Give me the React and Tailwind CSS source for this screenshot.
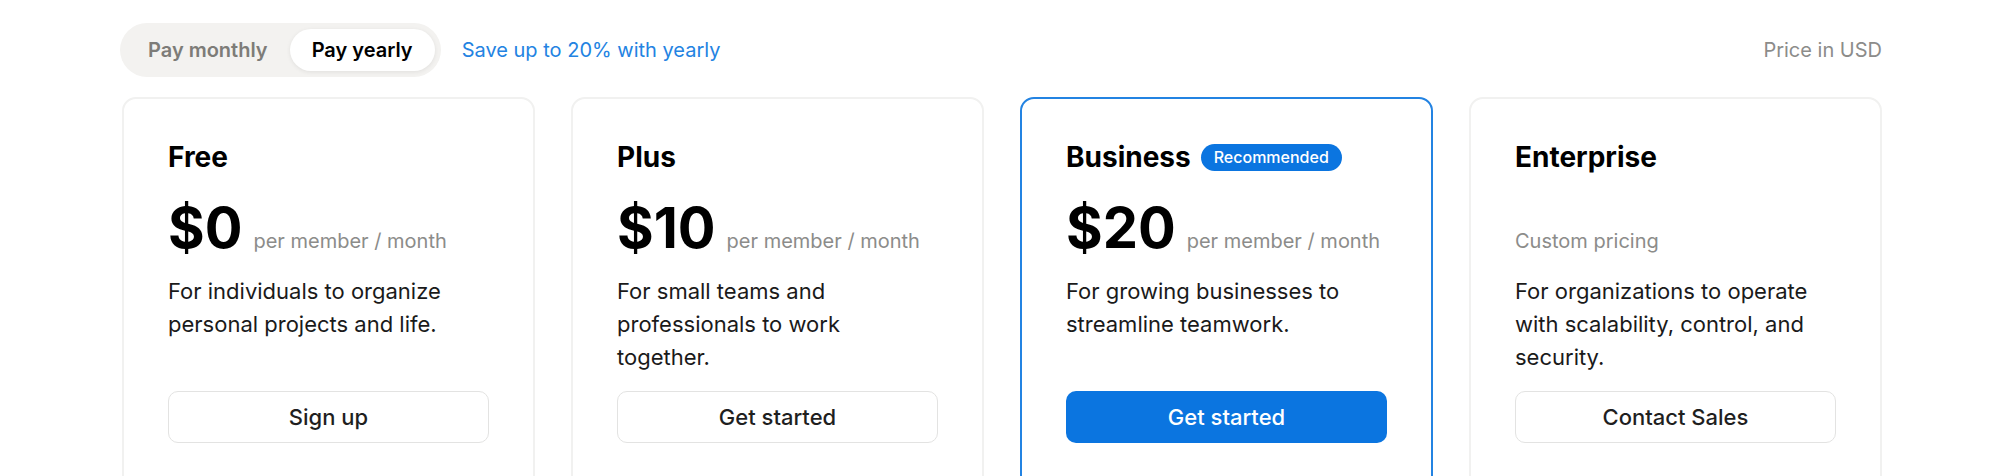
import React, { useState } from 'react';

const plans = [
  {
    name: 'Free',
    price: '$0',
    unit: 'per member / month',
    description: 'For individuals to organize personal projects and life.',
    cta: 'Sign up',
  },
  {
    name: 'Plus',
    price: '$10',
    unit: 'per member / month',
    description: 'For small teams and professionals to work together.',
    cta: 'Get started',
  },
  {
    name: 'Business',
    price: '$20',
    unit: 'per member / month',
    description: 'For growing businesses to streamline teamwork.',
    cta: 'Get started',
    recommended: true,
  },
  {
    name: 'Enterprise',
    price: null,
    unit: 'Custom pricing',
    description: 'For organizations to operate with scalability, control, and security.',
    cta: 'Contact Sales',
  },
];

const PlanCard = ({ plan }) => {
  return (
    <div
      className={`min-h-[430px] rounded-[14px] border-2 bg-white px-[44px] pt-[40px] ${
        plan.recommended ? 'border-[#2383e2]' : 'border-[#f1f1f0]'
      }`}
    >
      <div className="flex h-[36px] items-center gap-[10px]">
        <h3 className="text-[28px] font-bold leading-[36px] text-black">{plan.name}</h3>
        {plan.recommended && (
          <span className="flex h-[27px] items-center rounded-full bg-[#0b75e0] px-[13px] text-[16px] font-medium text-white">
            Recommended
          </span>
        )}
      </div>

      {plan.price ? (
        <div className="mt-[21px] flex h-[64px] items-baseline gap-[11px]">
          <span className="text-[56px] font-bold leading-[64px] text-black">{plan.price}</span>
          <span className="text-[20px] text-[#8c8c8a]">{plan.unit}</span>
        </div>
      ) : (
        <div className="mt-[21px] h-[64px] pt-[30px] text-[20px] leading-[30px] text-[#8c8c8a]">
          {plan.unit}
        </div>
      )}

      <p className="mt-[15px] min-h-[99px] text-[22px] leading-[33px] text-[#1a1a1a]">
        {plan.description}
      </p>

      <button
        className={`mt-[17px] flex h-[52px] w-full items-center justify-center rounded-[10px] text-[22px] font-medium ${
          plan.recommended
            ? 'bg-[#0b75e0] text-white'
            : 'border-[1.5px] border-[#e3e3e2] bg-white text-[#1f1f1f]'
        }`}
      >
        {plan.cta}
      </button>
    </div>
  );
};

export default function App() {
  const [billing, setBilling] = useState('yearly');

  return (
    <div className="min-h-screen bg-white font-['Inter',sans-serif]">
      <div className="ml-[122px] w-[1760px] pt-[23px]">
        <div className="flex h-[54px] items-center justify-between">
          <div className="flex items-center gap-[21px]">
            <div className="-ml-[2px] flex items-center rounded-full bg-[#f3f2f0] p-[6px]">
              <button
                onClick={() => setBilling('monthly')}
                className={`h-[42px] rounded-full px-[22px] text-[20px] font-semibold ${
                  billing === 'monthly'
                    ? 'bg-white text-black shadow-[0_1px_4px_rgba(0,0,0,0.08)]'
                    : 'text-[#7d7c78]'
                }`}
              >
                Pay monthly
              </button>
              <button
                onClick={() => setBilling('yearly')}
                className={`h-[42px] rounded-full px-[22px] text-[20px] font-semibold ${
                  billing === 'yearly'
                    ? 'bg-white text-black shadow-[0_1px_4px_rgba(0,0,0,0.08)]'
                    : 'text-[#7d7c78]'
                }`}
              >
                Pay yearly
              </button>
            </div>
            <span className="text-[20px] text-[#2383e2]">Save up to 20% with yearly</span>
          </div>
          <span className="text-[20px] text-[#8c8c8a]">Price in USD</span>
        </div>

        <div className="mt-[20px] grid grid-cols-4 gap-[36px]">
          {plans.map((plan) => (
            <PlanCard key={plan.name} plan={plan} />
          ))}
        </div>
      </div>
    </div>
  );
}
